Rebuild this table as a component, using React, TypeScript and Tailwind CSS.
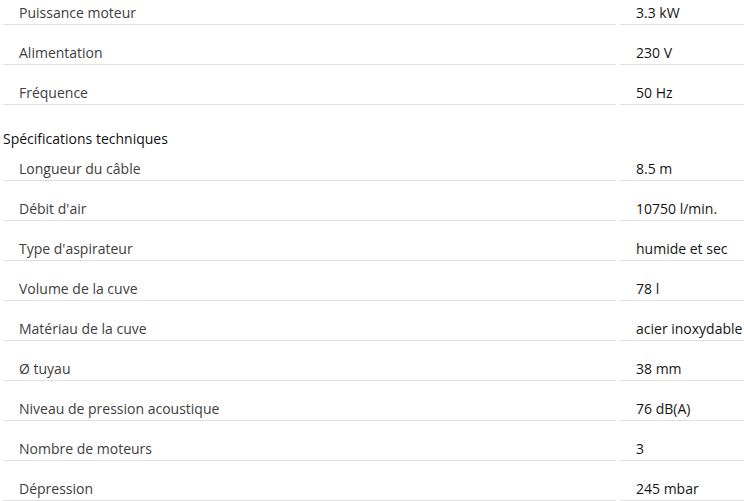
import React from "react";

const top: [string, string][] = [
  ["Puissance moteur", "3.3 kW"],
  ["Alimentation", "230 V"],
  ["Fréquence", "50 Hz"],
];

const tech: [string, string][] = [
  ["Longueur du câble", "8.5 m"],
  ["Débit d'air", "10750 l/min."],
  ["Type d'aspirateur", "humide et sec"],
  ["Volume de la cuve", "78 l"],
  ["Matériau de la cuve", "acier inoxydable"],
  ["Ø tuyau", "38 mm"],
  ["Niveau de pression acoustique", "76 dB(A)"],
  ["Nombre de moteurs", "3"],
  ["Dépression", "245 mbar"],
];

function Row({ label, value, first }: { label: string; value: string; first?: boolean }) {
  const pad = first ? "pt-[10px]" : "pt-[18px]";
  return (
    <div className="grid grid-cols-[613px_1fr] gap-x-[4px]">
      <div className={`${pad} pb-[1px] pl-[16px] leading-[20px] text-[14px] text-[#404040] border-b border-[#e0e0e0] whitespace-nowrap`}>
        {label}
      </div>
      <div className={`${pad} pb-[1px] pl-[16px] leading-[20px] text-[14px] text-[#151515] border-b border-[#e0e0e0] whitespace-nowrap`}>
        {value}
      </div>
    </div>
  );
}

export default function App() {
  return (
    <div
      className="w-[744px] h-[501px] overflow-hidden bg-white"
      style={{ fontFamily: '"Open Sans", "Noto Sans", sans-serif' }}
    >
      <div className="-mt-[15px] pl-[3px]">
        {top.map(([l, v]) => (
          <Row key={l} label={l} value={v} />
        ))}
        <div className="pt-[24px] leading-[20px] text-[14px] text-[#111]">Spécifications techniques</div>
        {tech.map(([l, v], i) => (
          <Row key={l} label={l} value={v} first={i === 0} />
        ))}
      </div>
    </div>
  );
}
